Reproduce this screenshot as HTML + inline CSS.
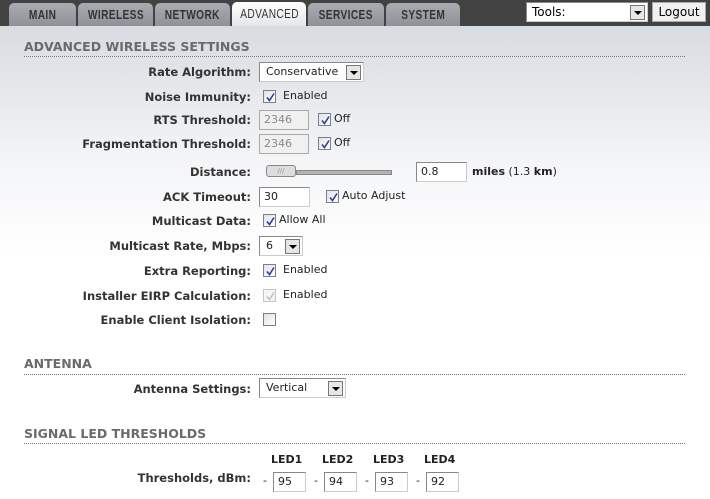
<!DOCTYPE html>
<html><head><meta charset="utf-8"><style>
*{margin:0;padding:0;box-sizing:border-box}
body{width:710px;height:499px;overflow:hidden;position:relative;font-family:"DejaVu Sans","Liberation Sans",sans-serif;font-size:11px;color:#222;background:linear-gradient(#d9dce1 0px,#d9dce1 30px,#f4f5f7 160px,#fff 260px,#fff 499px)}
.top{position:absolute;left:0;top:0;width:710px;height:26px;background:#424242}
.tab{position:absolute;top:3px;height:23px;background:linear-gradient(#a9acb1,#8e9197);border-radius:5px 5px 0 0;color:#333;font-family:"Liberation Sans",sans-serif;font-size:13px;font-weight:bold;text-align:center;line-height:24px;overflow:hidden}
.tab span{display:inline-block;transform:scaleX(0.78);letter-spacing:0.5px}
.tab.act{background:linear-gradient(#fff,#e4e6ea);top:2px;height:24px;color:#333;font-weight:normal}
.a{position:absolute;white-space:nowrap}
.l{position:absolute;right:459px;font-weight:bold;color:#333;white-space:nowrap;font-size:11.5px}
.h{position:absolute;left:24px;font-weight:bold;font-size:12.5px;color:#6a6a6a}
.line{position:absolute;left:24px;width:661px;border-top:1px dotted #777}
.in{position:absolute;height:20px;background:#fff;border:1px solid #888;border-right-color:#ccc;border-bottom-color:#ccc;padding-left:4px;line-height:18px}
.dis{background:#f0f0f0;color:#888;border-color:#aaa}
.cb{position:absolute;width:13px;height:13px;border:1px solid #7a7f87;background:linear-gradient(135deg,#dfe2e8,#fff)}
.cb svg{position:absolute;left:1px;top:1px}
.sel{position:absolute;height:20px;background:#fff;border:1px solid #888;border-right-color:#ccc;border-bottom-color:#ccc;padding-left:6px;line-height:18px}
.arr{position:absolute;right:2px;top:2px;width:15px;height:15px;border:1px solid #777;background:#e6e6e6}
.arr:after{content:"";position:absolute;left:3px;top:5px;border-left:4px solid transparent;border-right:4px solid transparent;border-top:4px solid #000}
</style></head><body>
<div class="top"></div>
<div class="tab" style="left:9px;width:67px"><span>MAIN</span></div>
<div class="tab" style="left:78px;width:75px"><span>WIRELESS</span></div>
<div class="tab" style="left:155px;width:75px"><span>NETWORK</span></div>
<div class="tab act" style="left:232px;width:74px"><span>ADVANCED</span></div>
<div class="tab" style="left:308px;width:76px"><span>SERVICES</span></div>
<div class="tab" style="left:386px;width:74px"><span>SYSTEM</span></div>
<div class="sel" style="left:526px;top:2px;width:122px;height:20px;font-size:12px;color:#000;padding-left:5px">Tools:<div class="arr"></div></div>
<div class="a" style="left:652px;top:2px;width:54px;height:20px;background:#f0f0f0;border:1px solid #aaa;text-align:center;line-height:18px;font-size:12px;color:#000">Logout</div>

<div class="h" style="top:39px">ADVANCED WIRELESS SETTINGS</div>
<div class="line" style="top:56px"></div>

<div class="l" style="top:65px">Rate Algorithm:</div>
<div class="sel" style="left:259px;top:62px;width:105px">Conservative<div class="arr"></div></div>

<div class="l" style="top:90px">Noise Immunity:</div>
<div class="cb" style="left:263px;top:90px"><svg width="11" height="11"><path d="M2 5.5 L4.5 8.5 L9 1.5" stroke="#2c3f9a" stroke-width="1.6" fill="none"/></svg></div>
<div class="a" style="left:283px;top:89px">Enabled</div>

<div class="l" style="top:113px">RTS Threshold:</div>
<div class="in dis" style="left:259px;top:110px;width:50px">2346</div>
<div class="cb" style="left:318px;top:113px"><svg width="11" height="11"><path d="M2 5.5 L4.5 8.5 L9 1.5" stroke="#2c3f9a" stroke-width="1.6" fill="none"/></svg></div>
<div class="a" style="left:334px;top:112px">Off</div>

<div class="l" style="top:137px">Fragmentation Threshold:</div>
<div class="in dis" style="left:259px;top:134px;width:50px">2346</div>
<div class="cb" style="left:318px;top:137px"><svg width="11" height="11"><path d="M2 5.5 L4.5 8.5 L9 1.5" stroke="#2c3f9a" stroke-width="1.6" fill="none"/></svg></div>
<div class="a" style="left:334px;top:136px">Off</div>

<div class="l" style="top:165px">Distance:</div>
<div class="a" style="left:296px;top:170px;width:96px;height:5px;background:#b4b4b4;border:1px solid #888"></div>
<div class="a" style="left:266px;top:165px;width:30px;height:12px;border:1px solid #888;border-radius:3px;background:#ddd;font-size:7px;color:#999;text-align:center;line-height:10px">///</div>
<div class="in" style="left:416px;top:162px;width:51px">0.8</div>
<div class="a" style="left:472px;top:165px"><b>miles</b> (1.3 <b>km</b>)</div>

<div class="l" style="top:190px">ACK Timeout:</div>
<div class="in" style="left:259px;top:187px;width:51px">30</div>
<div class="cb" style="left:326px;top:190px"><svg width="11" height="11"><path d="M2 5.5 L4.5 8.5 L9 1.5" stroke="#2c3f9a" stroke-width="1.6" fill="none"/></svg></div>
<div class="a" style="left:342px;top:189px">Auto Adjust</div>

<div class="l" style="top:214px">Multicast Data:</div>
<div class="cb" style="left:263px;top:214px"><svg width="11" height="11"><path d="M2 5.5 L4.5 8.5 L9 1.5" stroke="#2c3f9a" stroke-width="1.6" fill="none"/></svg></div>
<div class="a" style="left:279px;top:213px">Allow All</div>

<div class="l" style="top:239px">Multicast Rate, Mbps:</div>
<div class="sel" style="left:259px;top:236px;width:44px">6<div class="arr"></div></div>

<div class="l" style="top:264px">Extra Reporting:</div>
<div class="cb" style="left:263px;top:264px"><svg width="11" height="11"><path d="M2 5.5 L4.5 8.5 L9 1.5" stroke="#2c3f9a" stroke-width="1.6" fill="none"/></svg></div>
<div class="a" style="left:283px;top:263px">Enabled</div>

<div class="l" style="top:289px">Installer EIRP Calculation:</div>
<div class="cb" style="left:263px;top:289px;border-color:#c4c4c4;background:#f4f4f4"><svg width="11" height="11"><path d="M2 5.5 L4.5 8.5 L9 1.5" stroke="#bbb" stroke-width="1.4" fill="none"/></svg></div>
<div class="a" style="left:283px;top:288px">Enabled</div>

<div class="l" style="top:313px">Enable Client Isolation:</div>
<div class="cb" style="left:263px;top:313px"></div>

<div class="h" style="top:356px">ANTENNA</div>
<div class="line" style="top:374px"></div>
<div class="l" style="top:382px">Antenna Settings:</div>
<div class="sel" style="left:259px;top:378px;width:87px">Vertical<div class="arr"></div></div>

<div class="h" style="top:426px">SIGNAL LED THRESHOLDS</div>
<div class="line" style="top:443px"></div>
<div class="a" style="left:271px;top:453px;font-weight:bold">LED1</div>
<div class="a" style="left:322px;top:453px;font-weight:bold">LED2</div>
<div class="a" style="left:373px;top:453px;font-weight:bold">LED3</div>
<div class="a" style="left:424px;top:453px;font-weight:bold">LED4</div>
<div class="l" style="top:471px">Thresholds, dBm:</div>
<div class="a" style="left:263px;top:474px">-</div><div class="in" style="left:273px;top:472px;width:33px">95</div>
<div class="a" style="left:314px;top:474px">-</div><div class="in" style="left:324px;top:472px;width:33px">94</div>
<div class="a" style="left:365px;top:474px">-</div><div class="in" style="left:375px;top:472px;width:33px">93</div>
<div class="a" style="left:416px;top:474px">-</div><div class="in" style="left:426px;top:472px;width:33px">92</div>
</body></html>
